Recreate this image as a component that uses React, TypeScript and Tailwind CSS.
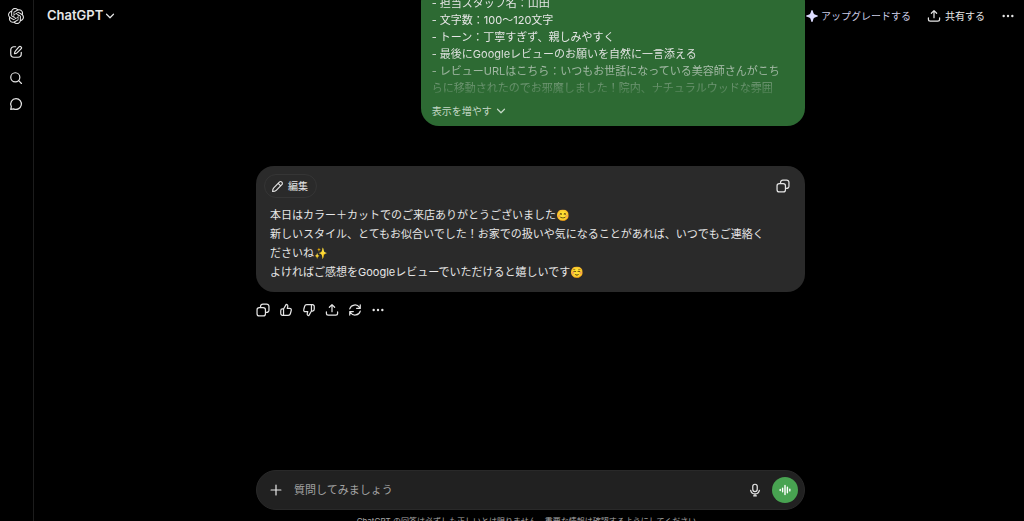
import type { ReactNode } from "react";

type IconProps = { className?: string; children: ReactNode };

function Icon({ className = "size-[14px]", children }: IconProps) {
  return (
    <svg
      viewBox="0 0 20 20"
      className={`${className} shrink-0`}
      fill="none"
      stroke="currentColor"
      strokeWidth="1.75"
      strokeLinecap="round"
      strokeLinejoin="round"
      aria-hidden="true"
    >
      {children}
    </svg>
  );
}

function LogoIcon() {
  return (
    <svg viewBox="0 0 24 24" className="size-4" fill="currentColor" aria-hidden="true">
      <path d="M22.282 9.821a5.985 5.985 0 0 0-.516-4.91 6.046 6.046 0 0 0-6.51-2.9A6.065 6.065 0 0 0 4.981 4.18a5.985 5.985 0 0 0-3.998 2.9 6.046 6.046 0 0 0 .743 7.097 5.98 5.98 0 0 0 .51 4.911 6.051 6.051 0 0 0 6.515 2.9A5.985 5.985 0 0 0 13.26 24a6.056 6.056 0 0 0 5.772-4.206 5.99 5.99 0 0 0 3.997-2.9 6.056 6.056 0 0 0-.747-7.073zM13.26 22.43a4.476 4.476 0 0 1-2.876-1.04l.141-.081 4.779-2.758a.795.795 0 0 0 .392-.681v-6.737l2.02 1.168a.071.071 0 0 1 .038.052v5.583a4.504 4.504 0 0 1-4.494 4.494zM3.6 18.304a4.47 4.47 0 0 1-.535-3.014l.142.085 4.783 2.759a.771.771 0 0 0 .78 0l5.843-3.369v2.332a.08.08 0 0 1-.033.062L9.74 19.95a4.5 4.5 0 0 1-6.14-1.646zM2.34 7.896a4.485 4.485 0 0 1 2.366-1.973V11.6a.766.766 0 0 0 .388.676l5.815 3.355-2.02 1.168a.076.076 0 0 1-.071 0l-4.83-2.786A4.504 4.504 0 0 1 2.34 7.872zm16.597 3.855l-5.833-3.387L15.119 7.2a.076.076 0 0 1 .071 0l4.83 2.791a4.494 4.494 0 0 1-.676 8.105v-5.678a.79.79 0 0 0-.407-.667zm2.01-3.023l-.141-.085-4.774-2.782a.776.776 0 0 0-.785 0L9.409 9.23V6.897a.066.066 0 0 1 .028-.061l4.83-2.787a4.5 4.5 0 0 1 6.68 4.66zm-12.64 4.135l-2.02-1.164a.08.08 0 0 1-.038-.057V6.075a4.5 4.5 0 0 1 7.375-3.453l-.142.08L8.704 5.46a.795.795 0 0 0-.393.681zm1.097-2.365l2.602-1.5 2.607 1.5v2.999l-2.597 1.5-2.607-1.5z" />
    </svg>
  );
}

function ComposeIcon() {
  return (
    <Icon>
      <path d="M9.5 2.500H7a4.500 4.500 0 0 0-4.500 4.500v6A4.500 4.500 0 0 0 7 17.500h6a4.500 4.500 0 0 0 4.500-4.500v-2.500" />
      <path d="M14.200 2.600a2.100 2.100 0 0 1 3 3l-5.800 5.700c-.8.8-2.500 1.100-3.600 1.200.1-1.100.4-2.800 1.200-3.600z" />
    </Icon>
  );
}

function SearchIcon() {
  return (
    <Icon>
      <circle cx="9" cy="9" r="6.500" />
      <path d="m13.800 13.800 4 4" />
    </Icon>
  );
}

function ChatIcon() {
  return (
    <Icon>
      <path d="M10 2.300a7.700 7.700 0 1 1-3.400 14.600L2.500 17.600l.8-4A7.700 7.700 0 0 1 10 2.300z" />
    </Icon>
  );
}

function CopyIcon() {
  return (
    <Icon>
      <rect x="1.500" y="6.500" width="12" height="12" rx="3.200" />
      <path d="M6.500 6.300V4.800a3.300 3.300 0 0 1 3.300-3.300h5.400a3.300 3.300 0 0 1 3.300 3.300v5.400a3.300 3.300 0 0 1-3.300 3.300h-1.500" />
    </Icon>
  );
}

function ThumbPath() {
  return (
    <path d="M6.500 8.500 10.300 2c1.700 0 2.600 1.300 2.200 2.900L11.800 7.600h3.400c1.700 0 2.800 1.500 2.300 3.100l-1.300 4.600c-.4 1.400-1.500 2.300-3 2.300H6.500M6.500 8.500H5a2.500 2.500 0 0 0-2.500 2.500v4A2.500 2.500 0 0 0 5 17.600h1.500M6.500 8.500v9.100" />
  );
}

function ThumbUpIcon() {
  return (
    <Icon>
      <ThumbPath />
    </Icon>
  );
}

function ThumbDownIcon() {
  return (
    <Icon>
      <g transform="rotate(180 10 10)">
        <ThumbPath />
      </g>
    </Icon>
  );
}

function ShareIcon() {
  return (
    <Icon>
      <path d="M10 12.500V2.500M6.200 6.100 10 2.300l3.800 3.800" />
      <path d="M2 12.800v1.700a2.700 2.700 0 0 0 2.700 2.700h10.600a2.700 2.700 0 0 0 2.700-2.700v-1.700" />
    </Icon>
  );
}

function RetryIcon() {
  return (
    <Icon>
      <path d="M2.500 8.500a7.700 7.700 0 0 1 14-2L17.300 7.800M17.500 2.700v5.100h-5.100" />
      <path d="M17.500 11.500a7.700 7.700 0 0 1-14 2L2.700 12.200M2.500 17.300v-5.100h5.100" />
    </Icon>
  );
}

function DotsIcon() {
  return (
    <Icon>
      <g fill="currentColor" stroke="none">
        <circle cx="3.800" cy="10" r="1.700" />
        <circle cx="10" cy="10" r="1.700" />
        <circle cx="16.200" cy="10" r="1.700" />
      </g>
    </Icon>
  );
}

function ChevronIcon() {
  return (
    <Icon className="size-[10px]">
      <path d="m3 6.500 7 7 7-7" strokeWidth="2.400" />
    </Icon>
  );
}

function PencilIcon() {
  return (
    <Icon className="size-[13px]">
      <path d="M12.800 3.300a2.700 2.700 0 0 1 3.900 3.900L8 15.900c-1.400 1.400-3.500 1.700-5.500 1.700 0-2 .4-4.100 1.700-5.400zM11 5.200l3.900 3.900" />
    </Icon>
  );
}

function SparkIcon() {
  return (
    <svg viewBox="0 0 20 20" className="size-3 shrink-0" fill="#dcdcff" aria-hidden="true">
      <path d="M10 0c1 0 1.200 1.200 1.700 3 1 3.600 1.700 4.300 5.300 5.300 1.800.5 3 .7 3 1.700s-1.200 1.200-3 1.700c-3.600 1-4.300 1.700-5.300 5.300-.5 1.800-.7 3-1.700 3s-1.200-1.200-1.700-3c-1-3.600-1.700-4.300-5.300-5.300-1.800-.5-3-.7-3-1.700s1.200-1.200 3-1.700c3.600-1 4.300-1.700 5.300-5.300C8.800 1.200 9 0 10 0z" />
    </svg>
  );
}

function MicIcon() {
  return (
    <Icon>
      <rect x="6.800" y="1.800" width="6.400" height="10.400" rx="3.200" />
      <path d="M3.800 10.500a6.300 6.300 0 0 0 12.400 0M10 16v2M8 18.300h4" />
    </Icon>
  );
}

function VoiceIcon() {
  return (
    <Icon className="size-3">
      <path d="M2 9v2M6 7v6M10 2.500v15M14 5.500v9M18 8.500v3" strokeWidth="2.400" />
    </Icon>
  );
}

const promptLines = [
  "- 担当スタッフ名：山田",
  "- 文字数：100〜120文字",
  "- トーン：丁寧すぎず、親しみやすく",
  "- 最後にGoogleレビューのお願いを自然に一言添える",
  "- レビューURLはこちら：いつもお世話になっている美容師さんがこち",
  "らに移動されたのでお邪魔しました！院内、ナチュラルウッドな雰囲",
];

const replyLines = [
  "本日はカラー＋カットでのご来店ありがとうございました😊",
  "新しいスタイル、とてもお似合いでした！お家での扱いや気になることがあれば、いつでもご連絡く",
  "ださいね✨",
  "よければご感想をGoogleレビューでいただけると嬉しいです☺️",
];

const actions = [
  { label: "コピー", icon: <CopyIcon /> },
  { label: "良い回答", icon: <ThumbUpIcon /> },
  { label: "良くない回答", icon: <ThumbDownIcon /> },
  { label: "共有", icon: <ShareIcon /> },
  { label: "再生成", icon: <RetryIcon /> },
  { label: "その他", icon: <DotsIcon /> },
];

export default function App() {
  return (
    <div
      lang="ja"
      className="flex h-screen overflow-hidden bg-black font-['Inter','Noto_Sans_CJK_JP','Noto_Color_Emoji',sans-serif] text-[11px] text-[#e6e6e6]"
    >
      <nav className="flex w-[34px] shrink-0 flex-col items-center border-r border-[#1c1c1c] pt-2 pr-[2px]">
        <a href="#home" aria-label="ChatGPT">
          <LogoIcon />
        </a>
        <div className="mt-[21px] flex flex-col gap-3">
          <button aria-label="新しいチャット" className="h-[14px]">
            <ComposeIcon />
          </button>
          <button aria-label="検索" className="h-[14px]">
            <SearchIcon />
          </button>
          <button aria-label="チャット" className="h-[14px]">
            <ChatIcon />
          </button>
        </div>
      </nav>

      <div className="relative flex min-w-0 flex-1 flex-col pl-[3px]">
        <header className="absolute inset-x-0 top-0 z-10 flex h-8 items-center justify-between pr-[9px] pl-[13px]">
          <button className="flex items-center gap-[2px] text-[13px] font-semibold">
            ChatGPT
            <ChevronIcon />
          </button>
          <div className="flex items-center text-[10px]">
            <button className="flex items-center gap-[3px] text-[#cdcde6]">
              <SparkIcon />
              アップグレードする
            </button>
            <button className="ml-4 flex items-center gap-1">
              <ShareIcon />
              共有する
            </button>
            <button aria-label="メニュー" className="ml-4">
              <DotsIcon />
            </button>
          </div>
        </header>

        <main className="mx-auto flex min-h-0 w-full max-w-[549px] flex-1 flex-col overflow-hidden">
          <section className="-mt-4 w-[70%] shrink-0 self-end rounded-[18px] bg-[#2d6a33] px-[11px] pt-[11px] pb-[7px]">
            <div className="leading-[17px] whitespace-nowrap [mask-image:linear-gradient(to_bottom,black_55%,transparent_105%)]">
              {promptLines.map((line) => (
                <p key={line}>{line}</p>
              ))}
            </div>
            <button className="mt-[6px] flex h-4 items-center gap-1 text-[10px] text-[#c4d8c6]">
              表示を増やす
              <ChevronIcon />
            </button>
          </section>

          <article className="mt-10 shrink-0 rounded-[18px] bg-[#2a2a2a] px-2 pt-2 pb-[10px]">
            <div className="flex items-center justify-between pr-[7px]">
              <button className="flex h-6 items-center gap-1 rounded-full border border-[#353535] pr-2 pl-[6px] text-[10px]">
                <PencilIcon />
                編集
              </button>
              <button aria-label="コピー">
                <CopyIcon />
              </button>
            </div>
            <div className="mt-2 px-[6px] leading-[19px] whitespace-nowrap">
              {replyLines.map((line) => (
                <p key={line}>{line}</p>
              ))}
            </div>
          </article>

          <div className="mt-[11px] flex shrink-0 gap-[9px]">
            {actions.map((action) => (
              <button key={action.label} aria-label={action.label}>
                {action.icon}
              </button>
            ))}
          </div>
        </main>

        <footer className="mx-auto h-[51px] w-full max-w-[549px] shrink-0">
          <form className="flex h-10 items-center rounded-full border border-[#292929] bg-[#212121] pr-[6px] pl-3">
            <button type="button" aria-label="追加">
              <Icon>
                <path d="M10 3v14M3 10h14" />
              </Icon>
            </button>
            <input
              type="text"
              aria-label="質問"
              placeholder="質問してみましょう"
              className="ml-[11px] min-w-0 flex-1 bg-transparent outline-none placeholder:text-[#a3a3a3]"
            />
            <button type="button" aria-label="音声入力">
              <MicIcon />
            </button>
            <button
              type="button"
              aria-label="音声モード"
              className="ml-[10px] flex size-[26px] items-center justify-center rounded-full bg-[#48a351] text-white"
            >
              <VoiceIcon />
            </button>
          </form>
          <p className="mt-[5px] text-center text-[8px] leading-3 text-[#a8a8a8]">
            ChatGPT の回答は必ずしも正しいとは限りません。重要な情報は確認するようにしてください。
          </p>
        </footer>
      </div>
    </div>
  );
}
